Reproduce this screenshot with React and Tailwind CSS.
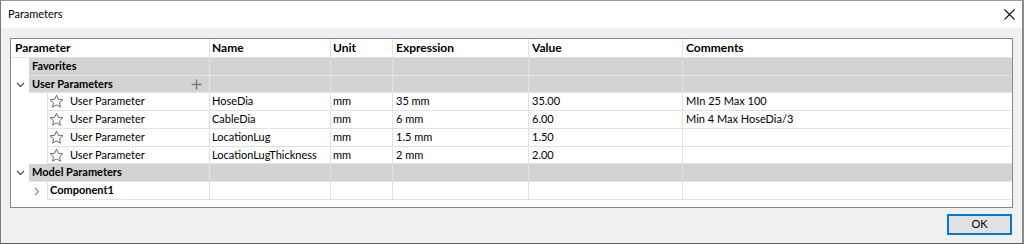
import React from "react";

function Star() {
  return (
    <svg width="15" height="15" viewBox="0 0 15 15" className="shrink-0">
      <path
        d="M7.5 1.2 L9.35 5.25 L13.8 5.75 L10.5 8.75 L11.4 13.2 L7.5 10.95 L3.6 13.2 L4.5 8.75 L1.2 5.75 L5.65 5.25 Z"
        fill="none"
        stroke="#6a6a6a"
        strokeWidth="1"
        strokeLinejoin="round"
      />
    </svg>
  );
}

function ChevDown() {
  return (
    <svg width="9" height="6" viewBox="0 0 9 6">
      <polyline points="1,1 4.5,4.5 8,1" fill="none" stroke="#4a4a4a" strokeWidth="1.2" />
    </svg>
  );
}

function ChevRight() {
  return (
    <svg width="6" height="9" viewBox="0 0 6 9">
      <polyline points="1,1 4.5,4.5 1,8" fill="none" stroke="#8a8a8a" strokeWidth="1.1" />
    </svg>
  );
}

function Plus() {
  return (
    <svg width="11" height="11" viewBox="0 0 11 11">
      <path d="M5.5 0.5 V10.5 M0.5 5.5 H10.5" stroke="#7a7a7a" strokeWidth="1.4" />
    </svg>
  );
}

function Cells({ cells }) {
  return (
    <>
      <div className="w-[121px] shrink-0 border-r border-[#e2e2e2] pl-[2px] flex items-center">{cells[0]}</div>
      <div className="w-[62px] shrink-0 border-r border-[#e2e2e2] pl-[2px] flex items-center">{cells[1]}</div>
      <div className="w-[136px] shrink-0 border-r border-[#e2e2e2] pl-[3px] flex items-center">{cells[2]}</div>
      <div className="w-[154px] shrink-0 border-r border-[#e2e2e2] pl-[3px] flex items-center">{cells[3]}</div>
      <div className="flex-1 pl-[3px] flex items-center">{cells[4]}</div>
    </>
  );
}

function GroupRow({ label, h, chevron, plus }) {
  return (
    <div className={h}>
      <div className="flex h-full">
        <div className="w-[18px] shrink-0 bg-white flex items-center justify-center">
          {chevron ? <ChevDown /> : null}
        </div>
        <div className="flex-1 flex bg-[#d3d3d3] border-b border-[#e6e6e6] font-bold">
          <div className="w-[181px] shrink-0 border-r border-[#e6e6e6] pl-[3px] pr-[7px] flex items-center justify-between">
            <span>{label}</span>
            {plus ? <Plus /> : null}
          </div>
          <Cells cells={["", "", "", "", ""]} />
        </div>
      </div>
    </div>
  );
}

function ParamRow({ h, name, unit, expr, value, comment }) {
  return (
    <div className={h}>
      <div className="flex h-full">
        <div className="w-[36px] shrink-0 bg-white" />
        <div className="flex-1 flex border-b border-[#e2e2e2]">
          <div className="w-[163px] shrink-0 border-l border-r border-[#e2e2e2] pl-[1px] flex items-center gap-[6px]">
            <Star />
            <span>User Parameter</span>
          </div>
          <Cells cells={[name, unit, expr, value, comment]} />
        </div>
      </div>
    </div>
  );
}

export default function App() {
  return (
    <div className="w-[1024px] h-[244px] bg-[#f0f0f0] border-l border-r-2 border-b border-t border-l-[#7b7b7b] border-r-[#8a8a8a] border-b-[#5a5a5a] border-t-[#9a9a9a] font-['Lato',sans-serif] text-[11px] text-black flex flex-col overflow-hidden">
      <div className="h-[27px] shrink-0 bg-white flex items-center justify-between pl-[7px] pr-[7px]">
        <span className="text-[11px]">Parameters</span>
        <svg width="11" height="11" viewBox="0 0 11 11">
          <path d="M0.5 0.5 L10.5 10.5 M10.5 0.5 L0.5 10.5" stroke="#111" strokeWidth="1.1" />
        </svg>
      </div>
      <div className="flex-1 flex flex-col px-[9px] pt-[10px]">
        <div className="h-[170px] shrink-0 border border-[#828790] bg-white flex flex-col">
          <div className="h-[19px] shrink-0 flex border-b border-[#e2e2e2] font-bold text-[12px]">
            <div className="w-[199px] shrink-0 border-r border-[#e2e2e2] pl-[4px] flex items-center">Parameter</div>
            <Cells cells={["Name", "Unit", "Expression", "Value", "Comments"]} />
          </div>
          <GroupRow h="h-[18px]" label="Favorites" />
          <GroupRow h="h-[17px]" label="User Parameters" chevron plus />
          <ParamRow h="h-[18px]" name="HoseDia" unit="mm" expr="35 mm" value="35.00" comment="MIn 25 Max 100" />
          <ParamRow h="h-[18px]" name="CableDia" unit="mm" expr="6 mm" value="6.00" comment="Min 4 Max HoseDia/3" />
          <ParamRow h="h-[18px]" name="LocationLug" unit="mm" expr="1.5 mm" value="1.50" comment="" />
          <ParamRow h="h-[17px]" name="LocationLugThickness" unit="mm" expr="2 mm" value="2.00" comment="" />
          <GroupRow h="h-[18px]" label="Model Parameters" chevron />
          <div className="h-[18px] shrink-0">
            <div className="flex h-full">
              <div className="w-[36px] shrink-0 bg-white flex items-center justify-end pr-[7px]">
                <ChevRight />
              </div>
              <div className="flex-1 flex border-b border-[#e2e2e2] font-bold">
                <div className="w-[163px] shrink-0 border-l border-r border-[#e2e2e2] pl-[2px] flex items-center">Component1</div>
                <Cells cells={["", "", "", "", ""]} />
              </div>
            </div>
          </div>
        </div>
        <div className="flex justify-end pt-[6px] pr-[1px]">
          <button className="w-[65px] h-[21px] border-2 border-[#0078d7] bg-[#e1e1e1] text-[11px] flex items-center justify-center">OK</button>
        </div>
      </div>
    </div>
  );
}
